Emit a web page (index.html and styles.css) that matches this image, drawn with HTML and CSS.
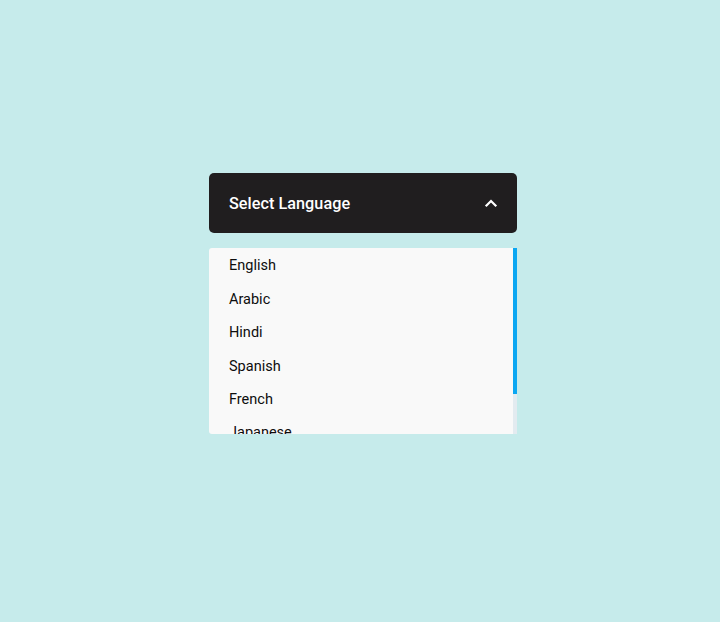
FILE: index.html
```html
<!DOCTYPE html>
<html lang="en">
<head>
<meta charset="utf-8">
<title>Select Language</title>
<link rel="stylesheet" href="styles.css">
</head>
<body>
<div class="dropdown">
  <div class="dropdown-header">
    <span class="dropdown-title">Select Language</span>
    <svg class="chevron" width="14" height="14" viewBox="0 0 14 14" aria-hidden="true">
      <path d="M2.5 9.5 L7 5 L11.5 9.5" fill="none" stroke="#ffffff" stroke-width="2.2" stroke-linecap="square"/>
    </svg>
  </div>
  <div class="dropdown-panel">
    <ul class="dropdown-list">
      <li class="dropdown-item">English</li>
      <li class="dropdown-item">Arabic</li>
      <li class="dropdown-item">Hindi</li>
      <li class="dropdown-item">Spanish</li>
      <li class="dropdown-item">French</li>
      <li class="dropdown-item">Japanese</li>
      <li class="dropdown-item">German</li>
    </ul>
    <div class="scroll-track"><div class="scroll-thumb"></div></div>
  </div>
</div>
</body>
</html>
```

FILE: styles.css
```css
html, body {
  margin: 0;
  padding: 0;
}

body {
  background: #c6ebeb;
  width: 720px;
  height: 622px;
  font-family: Roboto, "Noto Sans", Arial, sans-serif;
  overflow: hidden;
}

.dropdown {
  width: 308px;
  margin: 173px 0 0 209px;
  display: flex;
  flex-direction: column;
  gap: 15px;
}

.dropdown-header {
  height: 60px;
  box-sizing: border-box;
  background: #201e1f;
  border-radius: 5px;
  padding: 0 19px 0 20px;
  display: flex;
  align-items: center;
  justify-content: space-between;
}

.dropdown-title {
  color: #ffffff;
  font-size: 16.2px;
  font-weight: 500;
  letter-spacing: 0.05px;
}

.chevron {
  display: block;
}

.dropdown-panel {
  height: 186px;
  display: flex;
  background: #f9f9f9;
  border-radius: 3px 0 0 3px;
  overflow: hidden;
}

.dropdown-list {
  flex: 1;
  list-style: none;
  margin: 0;
  padding: 1px 0 0;
  overflow: hidden;
}

.scroll-track {
  width: 4px;
  background: #e3ebf0;
  display: flex;
  flex-direction: column;
}

.scroll-thumb {
  height: 146px;
  background: #0ba7f2;
}

.dropdown-item {
  height: 33.45px;
  display: flex;
  align-items: center;
  padding: 0 20px;
  font-size: 14.5px;
  color: #0d0d0d;
}
```
